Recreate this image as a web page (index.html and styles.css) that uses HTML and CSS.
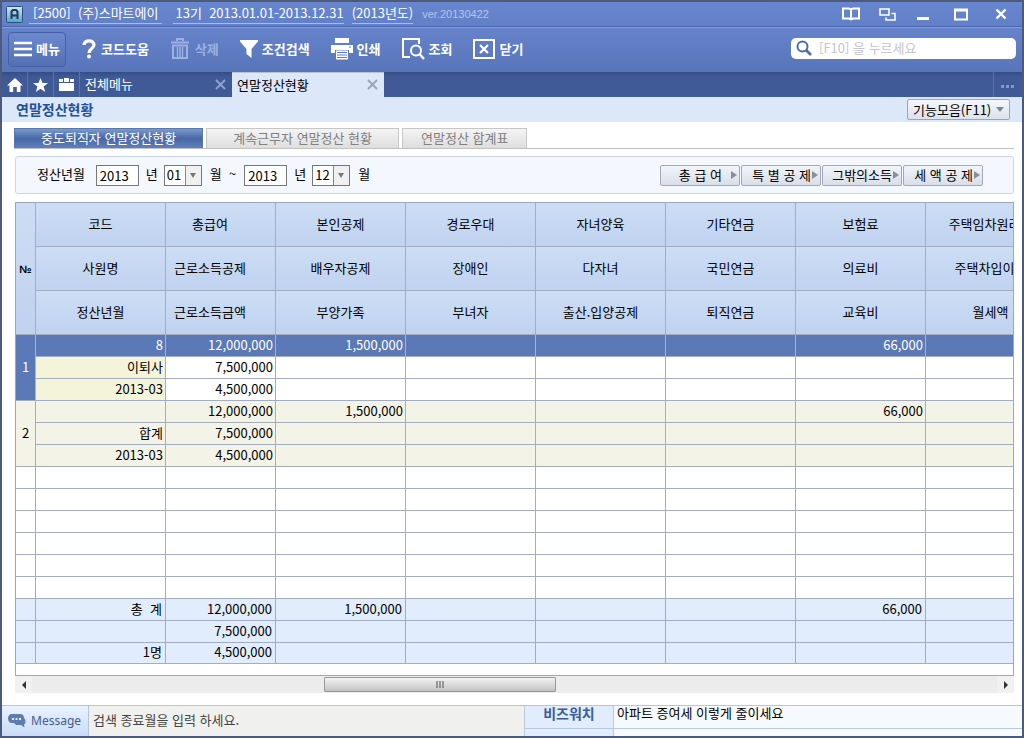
FILE: index.html
```html
<!DOCTYPE html>
<html lang="ko">
<head>
<meta charset="utf-8">
<title>연말정산현황</title>
<link rel="stylesheet" href="styles.css">
</head>
<body>
<header class="titlebar">
  <svg class="logo" width="17" height="17" viewBox="0 0 17 17"><defs><linearGradient id="lg" x1="0" y1="0" x2="0" y2="1"><stop offset="0" stop-color="#cfe9f2"/><stop offset="1" stop-color="#4fa6cf"/></linearGradient></defs><rect x=".5" y=".5" width="16" height="16" rx="1" fill="url(#lg)" stroke="#2e4f78"/><path d="M5.500 13V5.500l1.500-1.500h3l1.500 1.500V13M5 9.500h7" fill="none" stroke="#1f3a55" stroke-width="2"/></svg>
  <span class="company">[2500]&nbsp; (주)스마트에이</span>
  <span class="period">13기&nbsp; 2013.01.01-2013.12.31</span>
  <span class="year">(2013년도)</span>
  <span class="version">ver.20130422</span>
  <div class="window-buttons">
    <button aria-label="도움말"><svg width="18" height="14" viewBox="0 0 18 14"><path d="M1 1.500h6l2 1 2-1h6v10h-6l-2 1-2-1H1zM9 2v11" fill="none" stroke="#fff" stroke-width="2"/></svg></button>
    <button aria-label="창 전환"><svg width="17" height="13" viewBox="0 0 17 13"><path d="M1 1h9v6H1zM12.500 5.500H16v6.500H7V9.500" fill="none" stroke="#fff" stroke-width="1.600"/></svg></button>
    <button aria-label="최소화"><svg width="14" height="13" viewBox="0 0 14 13"><path d="M1 10.500h12" stroke="#fff" stroke-width="3"/></svg></button>
    <button class="wide" aria-label="최대화"><svg width="14" height="13" viewBox="0 0 14 13"><path d="M1 2h12v9.500H1z" fill="none" stroke="#fff" stroke-width="2"/><path d="M0 2h14" stroke="#fff" stroke-width="3"/></svg></button>
    <button class="wide" aria-label="창 닫기"><svg width="12" height="12" viewBox="0 0 12 12"><path d="M1.500 1.500l9 9m0-9l-9 9" stroke="#fff" stroke-width="2.400"/></svg></button>
  </div>
</header>

<nav class="toolbar">
  <button class="tool menu"><svg width="18" height="16" viewBox="0 0 18 16"><path d="M0 2h18M0 8h18M0 14h18" stroke="#fff" stroke-width="2.600"/></svg>메뉴</button>
  <button class="tool"><svg width="15" height="20" viewBox="0 0 15 20"><path d="M2 6C2 .500 12 .500 12 6c0 3.500-5 3.500-5 8" fill="none" stroke="#fff" stroke-width="3.200"/><circle cx="7" cy="17.500" r="2" fill="#fff"/></svg>코드도움</button>
  <button class="tool" disabled><svg width="21" height="22" viewBox="0 0 21 22"><path d="M7 3V1h6v2M1 4.500h18M3 7.500h14V20H3z" fill="none" stroke="#9db1e0" stroke-width="2"/><path d="M7.500 9v10M12.500 9v10M10 9v10" stroke="#9db1e0" stroke-width="1.400"/></svg>삭제</button>
  <button class="tool"><svg width="18" height="18" viewBox="0 0 18 18"><path d="M0 0h18v1.500L11.500 9v9L6.500 14V9L0 1.500z" fill="#fff"/></svg>조건검색</button>
  <button class="tool"><svg width="22" height="22" viewBox="0 0 22 22"><path d="M4 0h14v5H4zM0 7h22v8h-4v-3H4v3H0z" fill="#fff"/><path d="M5 12.500h12v9H5z" fill="#fff"/><path d="M6 14.500h10M6 17h10M6 19.500h10" stroke="#5d7bc3"/><path d="M18 9h2" stroke="#5d7bc3"/></svg>인쇄</button>
  <button class="tool"><svg width="23" height="22" viewBox="0 0 23 22"><path d="M17 6V1H1v18h7" fill="none" stroke="#fff" stroke-width="2"/><circle cx="14" cy="12.500" r="5" fill="none" stroke="#fff" stroke-width="2"/><path d="M17.500 16l4.500 5" stroke="#fff" stroke-width="2.400"/></svg>조회</button>
  <button class="tool"><svg width="22" height="20" viewBox="0 0 22 20"><path d="M1 1h20v18H1z" fill="none" stroke="#fff" stroke-width="2"/><path d="M7 6l8 8m0-8l-8 8" stroke="#fff" stroke-width="2.200"/></svg>닫기</button>
  <label class="search">
    <svg width="16" height="16" viewBox="0 0 16 16"><circle cx="6.500" cy="6.500" r="5" fill="none" stroke="#4d6ba5" stroke-width="2"/><path d="M10 10l5 5" stroke="#4d6ba5" stroke-width="2.600"/></svg>
    <input type="text" aria-label="검색" placeholder="[F10] 을 누르세요">
  </label>
</nav>

<nav class="tabstrip">
  <button class="icon-tab" aria-label="홈"><svg width="16" height="14" viewBox="0 0 16 14"><path d="M8 0l8 7.500h-2.500V14H9.800V9H6.200v5H2.500V7.500H0z" fill="#fff"/></svg></button>
  <button class="icon-tab" aria-label="즐겨찾기"><svg width="15" height="14" viewBox="0 0 15 14"><path d="M7.500 0l2 5h5.500l-4.400 3.400L12.200 14 7.500 10.700 2.800 14l1.600-5.600L0 5h5.500z" fill="#fff"/></svg></button>
  <button class="icon-tab" aria-label="일정"><svg width="15" height="13" viewBox="0 0 15 13"><path d="M0 5h15v8H0zM0 1h4v3H0zM5 0h5v4H5zM11 1h4v3h-4z" fill="#fff"/></svg></button>
  <div class="tab"><a href="#all">전체메뉴</a><button aria-label="전체메뉴 닫기"><svg width="11" height="11" viewBox="0 0 11 11"><path d="M1 1l9 9m0-9l-9 9" stroke="currentColor" stroke-width="1.800"/></svg></button></div>
  <div class="tab active"><a href="#status">연말정산현황</a><button aria-label="연말정산현황 닫기"><svg width="11" height="11" viewBox="0 0 11 11"><path d="M1 1l9 9m0-9l-9 9" stroke="currentColor" stroke-width="1.800"/></svg></button></div>
  <button class="more" aria-label="더보기"><svg width="14" height="4" viewBox="0 0 14 4"><path d="M0 0h3v3H0zM5 0h3v3H5zM10 0h3v3h-3z" fill="#7f97cb"/></svg></button>
</nav>

<div class="page-head">
  <h1>연말정산현황</h1>
  <button class="functions">기능모음(F11)<svg width="8" height="5" viewBox="0 0 8 5"><path d="M0 0h8L4 5z" fill="#7f8794"/></svg></button>
</div>

<main>
  <div class="subtabs">
    <button class="subtab active">중도퇴직자 연말정산현황</button>
    <button class="subtab">계속근무자 연말정산 현황</button>
    <button class="subtab narrow">연말정산 합계표</button>
  </div>

  <form class="filter">
    <label class="filter-label" for="y1">정산년월</label>
    <input id="y1" type="text" value="2013">
    <label for="m1">년</label>
    <span class="pick"><select id="m1"><option>01</option></select></span>
    <span class="unit">월&nbsp; ~</span>
    <input id="y2" type="text" value="2013" aria-label="종료년도">
    <label for="m2">년</label>
    <span class="pick"><select id="m2"><option>12</option></select></span>
    <span class="unit">월</span>
    <div class="jump">
      <button type="button"><span>총 급 여</span><i></i></button>
      <button type="button"><span>특 별 공 제</span><i></i></button>
      <button type="button"><span>그밖의소득</span><i></i></button>
      <button type="button"><span>세 액 공 제</span><i></i></button>
    </div>
  </form>

  <div class="grid">
    <table>
      <colgroup><col class="c-no"><col class="c-std"><col class="c-pay"><col class="c-std"><col class="c-std"><col class="c-std"><col class="c-std"><col class="c-std"><col class="c-std"></colgroup>
      <thead>
        <tr><th rowspan="3" class="no">№</th><th>코드</th><th class="pay">총급여</th><th>본인공제</th><th>경로우대</th><th>자녀양육</th><th>기타연금</th><th>보험료</th><th>주택임차원리금</th></tr>
        <tr><th>사원명</th><th class="pay">근로소득공제</th><th>배우자공제</th><th>장애인</th><th>다자녀</th><th>국민연금</th><th>의료비</th><th>주택차입이자</th></tr>
        <tr><th>정산년월</th><th class="pay">근로소득금액</th><th>부양가족</th><th>부녀자</th><th>출산.입양공제</th><th>퇴직연금</th><th>교육비</th><th>월세액</th></tr>
      </thead>
      <tbody>
        <tr class="selected"><td rowspan="3" class="num">1</td><td>8</td><td>12,000,000</td><td>1,500,000</td><td></td><td></td><td></td><td>66,000</td><td></td></tr>
        <tr><td class="key">이퇴사</td><td>7,500,000</td><td></td><td></td><td></td><td></td><td></td><td></td></tr>
        <tr><td class="key">2013-03</td><td>4,500,000</td><td></td><td></td><td></td><td></td><td></td><td></td></tr>
      </tbody>
      <tbody class="sum">
        <tr><td rowspan="3" class="num">2</td><td></td><td>12,000,000</td><td>1,500,000</td><td></td><td></td><td></td><td>66,000</td><td></td></tr>
        <tr><td>합계</td><td>7,500,000</td><td></td><td></td><td></td><td></td><td></td><td></td></tr>
        <tr><td>2013-03</td><td>4,500,000</td><td></td><td></td><td></td><td></td><td></td><td></td></tr>
      </tbody>
      <tbody>
        <tr><td></td><td></td><td></td><td></td><td></td><td></td><td></td><td></td><td></td></tr>
        <tr><td></td><td></td><td></td><td></td><td></td><td></td><td></td><td></td><td></td></tr>
        <tr><td></td><td></td><td></td><td></td><td></td><td></td><td></td><td></td><td></td></tr>
        <tr><td></td><td></td><td></td><td></td><td></td><td></td><td></td><td></td><td></td></tr>
        <tr><td></td><td></td><td></td><td></td><td></td><td></td><td></td><td></td><td></td></tr>
        <tr><td></td><td></td><td></td><td></td><td></td><td></td><td></td><td></td><td></td></tr>
      </tbody>
      <tfoot>
        <tr><td></td><td>총&nbsp; 계</td><td>12,000,000</td><td>1,500,000</td><td></td><td></td><td></td><td>66,000</td><td></td></tr>
        <tr><td></td><td></td><td>7,500,000</td><td></td><td></td><td></td><td></td><td></td><td></td></tr>
        <tr><td></td><td>1명</td><td>4,500,000</td><td></td><td></td><td></td><td></td><td></td><td></td></tr>
      </tfoot>
    </table>
  </div>
  <div class="scrollbar">
    <button type="button" aria-label="왼쪽"><svg width="4" height="8" viewBox="0 0 4 8"><path d="M4 0v8L0 4z" fill="#333"/></svg></button>
    <div class="thumb"><svg width="8" height="7" viewBox="0 0 8 7"><path d="M1 0v7M4 0v7M7 0v7" stroke="#666" stroke-width="1.200"/></svg></div>
    <button class="right" type="button" aria-label="오른쪽"><svg width="4" height="8" viewBox="0 0 4 8"><path d="M0 0v8l4-4z" fill="#333"/></svg></button>
  </div>
</main>

<footer class="status">
  <div class="message-label"><svg width="18" height="14" viewBox="0 0 18 14"><path d="M4 0h8c3 0 4 2 4 4 1 1 1.500 2 1.500 3.500 0 1.500-.5 2.500-1.500 3l.5 3-3.500-2.500H8L6 9H4C1.500 9 0 7 0 4.500S1.500 0 4 0z" fill="#5f7caf"/><path d="M4 4h2v2H4zM7.500 4h2v2h-2zM11 4h2v2h-2z" fill="#dfe9fa"/></svg>Message</div>
  <div class="message">검색 종료월을 입력 하세요.</div>
  <div class="news-label"><span>비즈워치</span></div>
  <div class="news"><a href="#news">아파트 증여세 이렇게 줄이세요</a></div>
</footer>
</body>
</html>
```
FILE: styles.css
```css
* { box-sizing: border-box; }

body {
  margin: 0;
  min-height: 100vh;
  display: flex;
  flex-direction: column;
  border: 2px solid #4c5b7d;
  background: #fff;
  color: #000;
  font: 13px/18px "Noto Sans CJK KR", sans-serif;
  overflow-x: hidden;
}

button, input, select { font: inherit; color: inherit; margin: 0; }
button { padding: 0; border: 0; background: none; white-space: nowrap; }
a { color: inherit; text-decoration: none; }
svg { display: block; flex: none; }

/* Title bar */
.titlebar {
  display: flex;
  align-items: center;
  height: 25px;
  padding-left: 4px;
  color: #fff;
  background: linear-gradient(#6886cf, #6280c8);
  border-bottom: 1px solid #4967ae;
  white-space: nowrap;
}
.company, .period, .year { height: 20px; line-height: 18px; border-bottom: 1px solid #a9bbe8; }
.company { margin-left: 6px; padding: 0 4px; }
.period { margin-left: 11px; padding-left: 2px; }
.year { margin-left: 8px; }
.version { margin-left: 9px; font: 11px/18px "Liberation Sans", sans-serif; color: #b5c4ec; }
.window-buttons { display: flex; margin-left: auto; padding-right: 1px; }
.window-buttons button { width: 36px; height: 22px; display: grid; place-items: center; }
.window-buttons .wide { width: 40px; }

/* Toolbar */
.toolbar {
  display: flex;
  align-items: center;
  gap: 21px;
  height: 45px;
  padding: 0 6px 2px;
  background: linear-gradient(#6683cb, #5875ba);
  border-top: 1px solid #829ddd;
}
.tool { display: flex; align-items: center; gap: 4px; color: #fff; font-weight: 700; }
.tool:disabled { color: #9db1e0; }
.menu {
  width: 58px;
  height: 35px;
  justify-content: center;
  margin-right: -5px;
  border: 1px solid #4661a3;
  border-radius: 4px;
  background: linear-gradient(#6c89d0, #5470b3);
}
.search {
  display: flex;
  align-items: center;
  gap: 7px;
  width: 225px;
  height: 21px;
  margin: 0 0 2px auto;
  padding: 0 5px;
  border-radius: 5px;
  background: #fff;
}
.search input { flex: 1; min-width: 0; padding: 0; border: 0; outline: 0; background: none; line-height: 18px; }
.search input::placeholder { color: #c3c6ca; opacity: 1; }

/* Document tabs */
.tabstrip {
  display: flex;
  height: 25px;
  color: #fff;
  background: linear-gradient(#344d85, #3f5a96 5px);
}
.icon-tab { width: 26px; display: grid; place-items: center; border-right: 1px solid #5a74ad; }
.tab { display: flex; align-items: center; justify-content: space-between; width: 152px; padding: 0 6px 1px 5px; }
.tab button { color: #8fa3cc; }
.tab.active { color: #000; background: #dce8f9; border-top: 1px solid #b8c2d2; }
.tab.active button { color: #98a3b3; }
.more { width: 29px; display: grid; place-items: center; margin-left: auto; padding-top: 5px; border-left: 1px solid #5a74ad; }

.page-head {
  display: flex;
  align-items: center;
  justify-content: space-between;
  height: 25px;
  padding: 0 12px 0 14px;
  background: #dce8f9;
}
h1 { margin: 0; padding-bottom: 2px; font-size: 14px; line-height: 20px; color: #23509c; }
.functions {
  display: flex;
  align-items: center;
  justify-content: space-between;
  width: 103px;
  height: 21px;
  padding: 0 5px;
  border: 1px solid #9da5b5;
  border-radius: 2px;
  line-height: 17px;
  background: linear-gradient(#f5f7fa, #dde2ea);
}

main { flex: 1; display: flex; flex-direction: column; padding: 6px 8px 12px 13px; }

.subtabs { display: flex; gap: 3px; height: 21px; margin-left: -1px; border-bottom: 1px solid #c3c0c0; }
.subtab {
  height: 20px;
  padding: 0 26px 2px;
  color: #808080;
  border: 1px solid #c6c6c6;
  border-bottom: 0;
  line-height: 17px;
  background: linear-gradient(#f4f4f4, #dedede);
}
.subtab.narrow { padding: 0 18px 2px; }
.subtab.active { color: #fff; border-color: #5a78b0; background: linear-gradient(#7b99ca, #4767a6 50%, #5f80bb); }

/* Search conditions */
.filter {
  display: flex;
  align-items: center;
  height: 38px;
  margin-top: 7px;
  padding: 0 30px 0 21px;
  border: 1px solid #cbd6ec;
  border-radius: 3px;
  background: #f4f7fd;
}
.filter input { width: 43px; height: 21px; padding: 0 3px; border: 1px solid #777; background: #fff; }
.filter label { margin: 0 6px 2px 7px; }
.filter .filter-label { margin: 0 11px 2px 0; }
.unit { margin: 0 8px 2px; }
.pick { display: flex; position: relative; }
.pick select {
  width: 38px;
  height: 21px;
  padding: 0 2px 2px;
  border: 1px solid #777;
  border-radius: 0;
  appearance: none;
  line-height: 17px;
  background: linear-gradient(to right, #fff 20px, #888 20px, #888 21px, #f0f0f0 21px);
}
.pick::after {
  content: "";
  position: absolute;
  right: 6px;
  top: 8px;
  border: 3px solid transparent;
  border-top: 5px solid #777;
  border-bottom: 0;
  pointer-events: none;
}
.jump { display: flex; gap: 1px; margin-left: auto; }
.jump button {
  display: flex;
  align-items: center;
  width: 80px;
  height: 21px;
  padding-right: 2px;
  border: 1px solid #a2a9bb;
  border-radius: 2px;
  background: linear-gradient(#f2f4f8, #d9dee9);
}
.jump span { flex: 1; padding-right: 1px; text-align: right; }
.jump button:first-child span { padding-right: 9px; }
.jump i { border: 4px solid transparent; border-left: 6px solid #888e9c; border-right: 0; }

/* Data grid */
.grid { flex: 1; margin-top: 8px; border: 1px solid #9aa8be; overflow: hidden; }
table { width: 1040px; table-layout: fixed; border-collapse: separate; border-spacing: 0; }
.c-no { width: 20px; }
.c-std { width: 130px; }
.c-pay { width: 110px; }
th, td { padding: 0 2px 2px; border-right: 1px solid #a3adbf; border-bottom: 1px solid #a3adbf; white-space: nowrap; }
th { height: 44px; font-weight: 400; background: linear-gradient(#cdddf5, #bfd2ef); }
th.no { padding: 0; font: 700 11px/18px "Liberation Sans", sans-serif; }
th.pay { padding-right: 23px; }
td { height: 22px; line-height: 18px; text-align: right; }
td.num { padding: 0 0 2px; text-align: center; }
.selected td { color: #fff; background: #5b78b7; border-right-color: #a6b3d3; }
td.key { background: #f3f4da; }
.sum td { background: #f4f3e7; }
tfoot td { padding-right: 3px; background: #e1edfd; }
tfoot tr:last-child td { height: 21px; }

.scrollbar {
  display: grid;
  grid-template-columns: 17px 292fr 231fr 441fr 17px;
  height: 17px;
  background: #ececec;
}
.scrollbar button { display: grid; place-items: center; background: #f1f1f1; }
.scrollbar .right { grid-column: 5; }
.thumb {
  grid-column: 3;
  display: grid;
  place-items: center;
  height: 15px;
  margin-top: 1px;
  border: 1px solid #999;
  border-radius: 1px;
  background: linear-gradient(#f2f2f2, #dcdcdc 50%, #c2c2c2);
}

/* Status bar */
.status { display: flex; height: 31px; border-top: 1px solid #bcc5cf; white-space: nowrap; }
.message-label {
  display: flex;
  align-items: center;
  gap: 5px;
  width: 87px;
  padding-left: 6px;
  border-right: 1px solid #b4c4de;
  background: linear-gradient(#eaf2ff, #c9dcf8);
  color: #3f5d94;
  font: 12px/18px "Noto Sans", sans-serif;
}
.message { flex: 427; padding: 5px 4px; color: #444; background: #f0f0ee; }
.news-label, .news { background: linear-gradient(transparent 22px, #b9c9de 22px, #b9c9de 23px, transparent 23px) #f6f9fe; }
.news-label { width: 90px; text-align: center; border: solid #b9c9de; border-width: 0 1px; background-color: #e1edfd; color: #3d5c98; font-size: 14px; font-weight: 700; line-height: 14px; }
.news { flex: 405; padding-left: 3px; line-height: 14px; }
```
